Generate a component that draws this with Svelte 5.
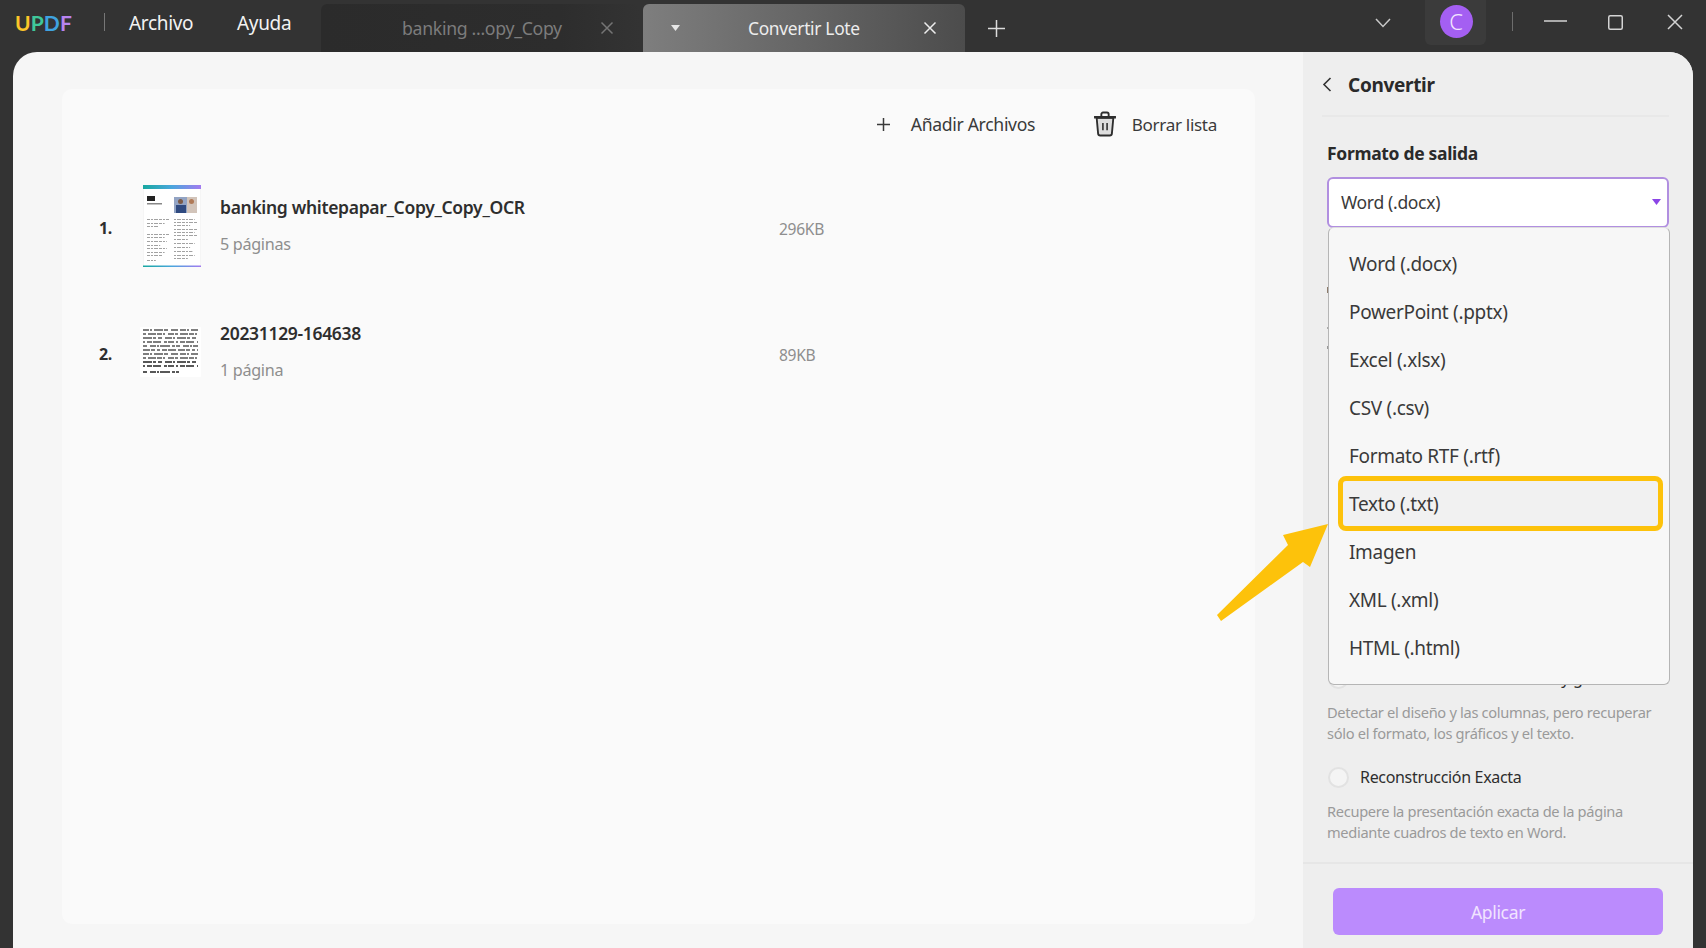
<script>
  const formats = ['Word (.docx)','PowerPoint (.pptx)','Excel (.xlsx)','CSV (.csv)','Formato RTF (.rtf)','Texto (.txt)','Imagen','XML (.xml)','HTML (.html)'];
  const leftLines = [[34,1],[38,.8],[41,.5],[49,1],[52,.8],[56,.9],[60,.6],[63,.9],[67,.8],[70,.7],[75,.4]];
  const rightLines = [[34,.9],[37,1],[40,.7],[44,1],[47,.9],[50,1],[54,.6],[58,.9],[62,.7],[66,.8],[70,.9],[73,.6]];
  const scanLines = [3,7,11,15,19,23,27,31,35,39,45];
  const patterns = ['6 1 2 2 9 1 4 3 7 2','3 2 8 1 5 1 2 3 6 1','9 1 3 2 4 3 7 1 2 2','2 2 5 1 8 3 3 1 6 2','4 3 6 1 2 1 10 2 3 1','7 1 4 2 3 2 5 1 8 2'];
</script>

<div class="app">
  <header class="topbar">
    <div class="logo"><span class="u">U</span><span class="p">P</span><span class="d">D</span><span class="f">F</span></div>
    <span class="vsep"></span>
    <span class="menu archivo">Archivo</span>
    <span class="menu ayuda">Ayuda</span>
    <div class="tab tab-off">
      <span class="tab-title">banking ...opy_Copy</span>
      <svg class="tab-x" width="14" height="14" viewBox="0 0 14 14"><path d="M1.5 1.5l11 11M12.5 1.5l-11 11" stroke="#757575" stroke-width="1.5" fill="none"/></svg>
    </div>
    <div class="tab tab-on">
      <svg class="caret" width="9" height="6" viewBox="0 0 9 6"><path d="M0 0h9L4.5 6z" fill="#e6e6e6"/></svg>
      <span class="tab-title">Convertir Lote</span>
      <svg class="tab-x" width="14" height="14" viewBox="0 0 14 14"><path d="M1.5 1.5l11 11M12.5 1.5l-11 11" stroke="#ededed" stroke-width="1.5" fill="none"/></svg>
    </div>
    <svg class="plus" width="17" height="17" viewBox="0 0 17 17"><path d="M8.5 0v17M0 8.5h17" stroke="#dcdcdc" stroke-width="1.5" fill="none"/></svg>
    <div class="win">
      <svg class="chev" width="16" height="10" viewBox="0 0 16 10"><path d="M1 1l7 7.5L15 1" stroke="#c8c8c8" stroke-width="1.5" fill="none"/></svg>
      <div class="avatar-box"><span class="avatar">C</span></div>
      <span class="win-sep"></span>
      <svg class="w-min" width="23" height="2" viewBox="0 0 23 2"><path d="M0 1h23" stroke="#d4d4d4" stroke-width="1.5"/></svg>
      <svg class="w-max" width="15" height="15" viewBox="0 0 15 15"><rect x=".75" y=".75" width="13.5" height="13.5" rx="1.5" stroke="#d4d4d4" stroke-width="1.5" fill="none"/></svg>
      <svg class="w-close" width="16" height="16" viewBox="0 0 16 16"><path d="M1 1l14 14M15 1L1 15" stroke="#d4d4d4" stroke-width="1.5" fill="none"/></svg>
    </div>
  </header>

  <main class="main">
    <section class="content">
      <div class="panel">
        <div class="toolbar">
          <svg width="13" height="13" viewBox="0 0 13 13"><path d="M6.5 0v13M0 6.5h13" stroke="#3a3a3a" stroke-width="1.5" fill="none"/></svg>
          <span class="add">Añadir Archivos</span>
          <svg class="trash" width="24" height="26" viewBox="0 0 23 24">
            <path d="M3.5 6l1.4 15.2c.1 1 .9 1.8 2 1.8h9.2c1.1 0 1.9-.8 2-1.8L19.500 6z" fill="#dedede" stroke="#2e2e2e" stroke-width="1.8"/>
            <path d="M1 5.500h21" stroke="#2e2e2e" stroke-width="2.400"/>
            <path d="M8 5V2.700C8 1.800 8.700 1 9.600 1h3.800c.9 0 1.600.8 1.600 1.700V5" fill="none" stroke="#2e2e2e" stroke-width="1.800"/>
            <path d="M9.500 11v7M13.500 11v7" stroke="#2e2e2e" stroke-width="1.500"/>
          </svg>
          <span class="clear">Borrar lista</span>
        </div>

        <div class="row">
          <span class="num">1.</span>
          <svg class="thumb1" width="58" height="82" viewBox="0 0 58 82">
            <defs><linearGradient id="bar"><stop offset="0" stop-color="#17a8a0"/><stop offset=".5" stop-color="#4aa6dd"/><stop offset="1" stop-color="#a37bf0"/></linearGradient></defs>
            <rect width="58" height="82" fill="#fff" stroke="#ebebeb"/>
            <rect width="58" height="4" fill="url(#bar)"/>
            <rect y="80.500" width="58" height="1.500" fill="url(#bar)"/>
            <rect x="4" y="11" width="8" height="5" fill="#222"/>
            <rect x="4" y="18" width="15" height="1.500" fill="#888"/>
            <rect x="31" y="12" width="23" height="16" fill="#d2c4ba"/>
            <rect x="31" y="12" width="13" height="16" fill="#93a4c4"/>
            <rect x="35" y="14" width="5" height="5" rx="2.500" fill="#7a5a48"/>
            <rect x="33" y="20" width="10" height="8" fill="#2f4a80"/>
            <rect x="46" y="14" width="5" height="5" rx="2.500" fill="#b07a58"/>
            {#each leftLines as [y, w]}<path d="M4 {y + .5}h{22 * w}" stroke="#8a8a8a" stroke-width=".8" stroke-dasharray="3 1 2 1 4 1"/>{/each}
            {#each rightLines as [y, w]}<path d="M31 {y + .5}h{23 * w}" stroke="#8a8a8a" stroke-width=".8" stroke-dasharray="2 1 4 1 3 1"/>{/each}
          </svg>
          <div class="info">
            <div class="name">banking whitepapar_Copy_Copy_OCR</div>
            <div class="pages">5 páginas</div>
          </div>
          <span class="size">296KB</span>
        </div>

        <div class="row">
          <span class="num">2.</span>
          <svg class="thumb2" width="61" height="50" viewBox="0 0 61 50">
            <rect width="61" height="50" rx="1" fill="#fff"/>
            {#each scanLines as y, i}<path d="M3 {y}h{i === 10 ? 36 : 55}" stroke={i > 7 ? '#222' : '#555'} stroke-width="1.300" stroke-dasharray={patterns[i % 6]}/>{/each}
          </svg>
          <div class="info">
            <div class="name">20231129-164638</div>
            <div class="pages">1 página</div>
          </div>
          <span class="size">89KB</span>
        </div>
      </div>
    </section>

    <aside class="side">
      <div class="side-head">
        <svg width="10" height="15" viewBox="0 0 10 15"><path d="M8.500 1L2 7.500 8.500 14" stroke="#333" stroke-width="1.600" fill="none"/></svg>
        <h2>Convertir</h2>
      </div>
      <div class="label">Formato de salida</div>
      <div class="select">
        <span>Word (.docx)</span>
        <svg width="9" height="6" viewBox="0 0 9 6"><path d="M0 0h9L4.500 6z" fill="#8b45e6"/></svg>
        <ul class="dropdown">
          {#each formats as f}
            <li class:hl={f === 'Texto (.txt)'}><span>{f}</span></li>
          {/each}
        </ul>
      </div>
      <div class="body">
        <span class="peek p1"></span>
        <span class="peek p2"></span>
        <span class="peek p3"></span>
        <div class="radio-row first"><span class="radio"></span><span>Reconstrucción de Párrafos y gráficos</span></div>
        <p class="desc d1">Detectar el diseño y las columnas, pero recuperar<br/>sólo el formato, los gráficos y el texto.</p>
        <div class="radio-row second"><span class="radio"></span><span>Reconstrucción Exacta</span></div>
        <p class="desc d2">Recupere la presentación exacta de la página<br/>mediante cuadros de texto en Word.</p>
      </div>
      <div class="footer"><button>Aplicar</button></div>
    </aside>
  </main>

  <svg class="arrow" width="112" height="98" viewBox="0 0 112 98"><polygon points="111,0 66,11 71,21 0,91 4,97 86,38 93,43" fill="#fdc20b"/></svg>
</div>

<style>
  :global(body) { margin: 0; }
  * { box-sizing: border-box; }
  .app {
    position: relative;
    display: flex;
    flex-direction: column;
    height: 948px;
    width: 1706px;
    overflow: hidden;
    background: #333;
    font-family: "Noto Sans", "Open Sans", sans-serif;
    letter-spacing: -0.02em;
    color: #333;
  }
  .topbar { height: 52px; flex: none; display: flex; align-items: flex-start; color: #f2f2f2; }
  .logo { margin: 9px 0 0 15px; width: 57px; font: 700 21px/27px Lato, sans-serif; letter-spacing: 0.1px; white-space: nowrap; }
  .u { color: #fbc52a; } .p { color: #3fc79a; } .d { color: #3fa3e0; } .f { color: #b884f0; }
  .vsep { width: 1px; height: 18px; margin: 13px 0 0 32px; background: #777; }
  .menu { font-size: 19px; line-height: 26px; margin-top: 10px; }
  .archivo { margin-left: 24px; width: 108px; }
  .ayuda { width: 84px; }
  .tab { height: 48px; margin-top: 4px; display: flex; align-items: center; border-radius: 6px 6px 0 0; position: relative; }
  .tab-off { width: 319px; padding-left: 81px; font-size: 17.700px; background: linear-gradient(90deg, #2b2b2b, #2d2d2d 75%, #333); color: #7c7c7c; }
  .tab-on { width: 322px; margin-left: 3px; font-size: 17.400px; background: linear-gradient(90deg, #7e7e7e, #4c4c4c); color: #ededed; }
  .tab-off .tab-x { position: absolute; left: 279px; }
  .caret { position: absolute; left: 28px; }
  .tab-on .tab-title { margin-left: 105px; }
  .tab-on .tab-x { position: absolute; left: 280px; }
  .plus { margin: 20px 0 0 23px; }
  .win { margin-left: auto; padding-right: 23px; display: flex; align-items: flex-start; }
  .chev { margin-top: 18px; }
  .avatar-box { margin-left: 34px; width: 61px; height: 45px; background: #3b3b3b; border-radius: 0 0 6px 6px; display: flex; justify-content: center; padding: 5px 0 0 1px; }
  .avatar { width: 33px; height: 33px; border-radius: 50%; background: #a45ff2; color: #f2e6ff; font-size: 22px; font-weight: 300; line-height: 32px; text-align: center; }
  .win-sep { width: 1px; height: 19px; margin: 12px 0 0 26px; background: #6d6d6d; }
  .w-min { margin: 20px 0 0 31px; }
  .w-max { margin: 15px 0 0 41px; }
  .w-close { margin: 14px 0 0 44px; }

  .main { flex: 1; min-height: 0; margin: 0 13px; display: flex; background: #f6f6f6; border-radius: 24px 24px 0 0; overflow: hidden; }
  .content { flex: 1; padding: 37px 48px 24px 49px; }
  .panel { height: 100%; background: #fafafa; border-radius: 10px; }
  .toolbar { height: 74px; padding: 0 38px 4px 0; display: flex; align-items: center; justify-content: flex-end; color: #3a3a3a; }
  .add { margin-left: 21px; width: 182px; font-size: 17.600px; }
  .clear { margin-left: 15px; font-size: 17.100px; }
  .row { height: 126px; padding-left: 38px; display: grid; grid-template-columns: 41px 62px 576px auto; align-items: center; }
  .num { font-weight: 700; font-size: 16px; padding-top: 4px; color: #2e2e2e; margin-left: -1px; }
  .thumb1 { margin-left: 2px; display: block; }
  .thumb2 { display: block; margin-left: -1px; }
  .info { padding: 0 0 2px 17px; }
  .name { font-size: 17.500px; line-height: 24px; font-weight: 600; color: #2e2e2e; margin-bottom: 13px; }
  .pages { font-size: 16.200px; line-height: 24px; color: #8e8e8e; }
  .size { font-size: 15.600px; padding-top: 6px; color: #8e8e8e; }

  .side { width: 390px; flex: none; background: #eee; display: flex; flex-direction: column; }
  .side-head { height: 65px; margin: 0 24px 0 19px; padding-top: 2px; display: flex; align-items: center; gap: 16px; border-bottom: 2px solid #e8e8e8; flex: none; }
  h2 { margin: 0; font-size: 19px; font-weight: 700; color: #2a2a2a; }
  .label { margin: 24px 0 12px 24px; line-height: 24px; font-size: 17.500px; font-weight: 700; color: #2a2a2a; flex: none; }
  .select { position: relative; flex: none; margin-left: 24px; width: 342px; height: 51px; padding: 0 6px 2px 12px; background: #fff; border: 2px solid #b18fe0; border-radius: 6px; display: flex; align-items: center; justify-content: space-between; font-size: 17.500px; color: #3a3a3a; }
  .dropdown { position: absolute; z-index: 2; top: 48px; left: -1px; width: 342px; height: 458px; margin: 0; padding: 12px 0 0; list-style: none; background: #f7f7f7; border: 1px solid #b5b5b5; border-top-color: #ddd; border-radius: 6px; font-size: 19px; color: #3a3a3a; }
  .dropdown li { position: relative; height: 48px; padding-left: 20px; display: flex; align-items: center; }
  .dropdown li span { position: relative; }
  .hl::before { content: ""; position: absolute; left: 9px; right: 6px; top: -4px; bottom: -3px; background: #f1f1f1; border: 5px solid #fdc20b; border-radius: 8px; }
  .body { flex: 1; padding-left: 24px; font-size: 16px; }
  .peek { display: block; width: 2px; background: #8d7c6c; }
  .p1 { height: 6px; margin-top: 59px; }
  .p2 { height: 2px; margin-top: 34px; background: #aaa; }
  .p3 { height: 3px; margin-top: 17px; background: #999; }
  .desc { margin: 0; font-size: 14.650px; line-height: 21px; color: #9a9a9a; white-space: nowrap; }
  .radio-row { height: 30px; display: flex; align-items: center; gap: 11px; color: #2e2e2e; white-space: nowrap; }
  .radio-row.first { margin-top: 314px; }
  .radio-row.second { margin-top: 18px; }
  .radio { width: 21px; height: 21px; margin-left: 1px; border-radius: 50%; background: #f4f4f4; border: 2px solid #e2e2e2; flex: none; }
  .d1 { margin-top: 9px; }
  .d2 { margin-top: 9px; }
  .footer { height: 86px; flex: none; border-top: 2px solid #e6e6e6; padding: 24px 0 0 30px; }
  button { display: block; width: 330px; height: 47px; border: none; border-radius: 6px; background: #bb8bfd; color: #f1e4ff; font: inherit; font-size: 17.500px; letter-spacing: inherit; padding: 0; }
  .arrow { position: absolute; left: 1217px; top: 524px; z-index: 3; }
</style>
